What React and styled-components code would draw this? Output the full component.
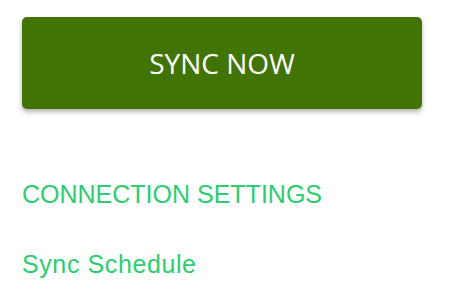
import React from 'react'
import styled, { createGlobalStyle } from 'styled-components'

const GlobalStyle = createGlobalStyle`
  body {
    margin: 0;
    background: #fff;
  }
`

const Page = styled.div`
  display: flex;
  flex-direction: column;
  padding: 17px 38px 0 22px;
`

const SyncButton = styled.button`
  width: 400px;
  height: 92px;
  border: 0;
  border-radius: 5px;
  background: #427405;
  color: #fff;
  font-family: "Open Sans", sans-serif;
  font-size: 28px;
  box-shadow: 0 3px 5px rgba(0, 0, 0, 0.3);
  cursor: pointer;
`

const Label = styled.div`
  color: #2ecc71;
  font-family: "Liberation Sans", Arial, sans-serif;
  font-size: 25px;
  line-height: 28px;
`

const SectionTitle = styled(Label)`
  margin-top: 71px;
`

const Item = styled(Label)`
  margin-top: 42px;
  letter-spacing: 0.6px;
`

export default function App() {
  return (
    <>
      <GlobalStyle />
      <Page>
        <SyncButton>SYNC NOW</SyncButton>
        <SectionTitle>CONNECTION SETTINGS</SectionTitle>
        <Item>Sync Schedule</Item>
      </Page>
    </>
  )
}
